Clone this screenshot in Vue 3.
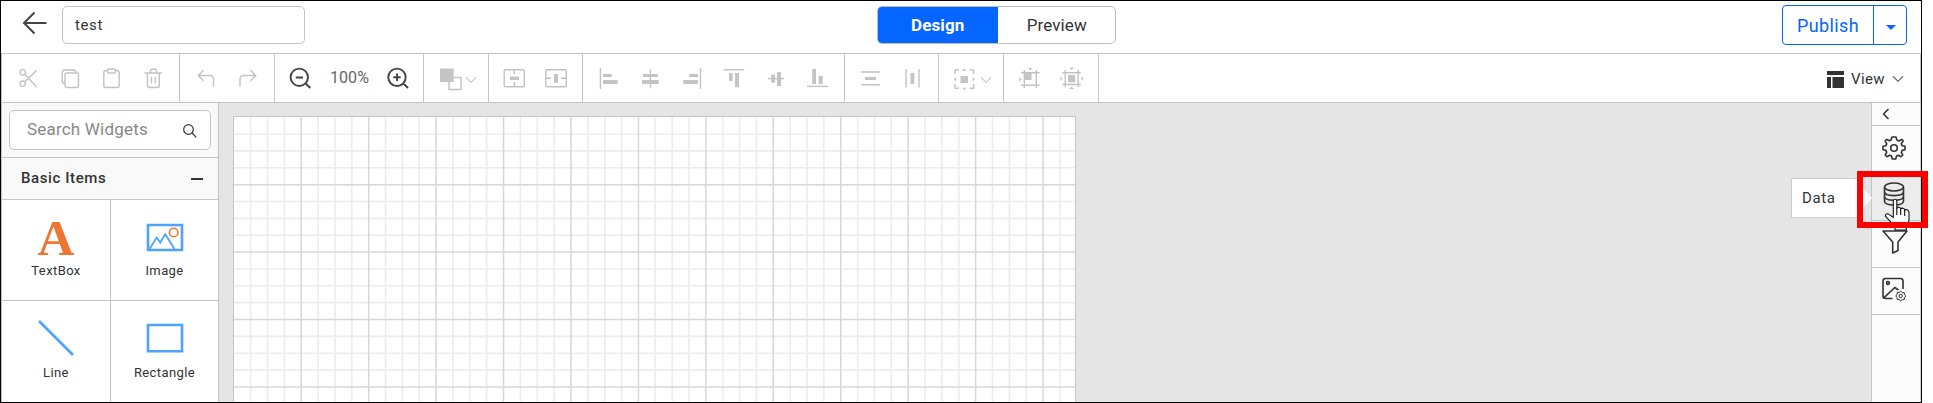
<script setup>
const groups = [
  ['cut', 'copy', 'paste', 'trash'],
  ['undo', 'redo'],
  ['zoomOut', 'level', 'zoomIn'],
  ['order', 'chevron'],
  ['centerH', 'centerV'],
  ['left', 'center', 'right', 'top', 'middle', 'bottom'],
  ['spaceV', 'spaceH'],
  ['size', 'chevron'],
  ['snap', 'fit'],
]
const widths = [178, 95, 149, 65, 94, 262, 94, 65, 95]
// s: stroked outline, f: filled shape
const icons = {
  cut: { s: 'M11.4 8.3a2.7 2.7 0 1 1-5.4 0a2.7 2.7 0 1 1 5.4 0zM11.4 19.7a2.7 2.7 0 1 1-5.4 0a2.7 2.7 0 1 1 5.4 0zM10.8 10.2L22.7 23M10.8 17.8L22.7 6.2' },
  copy: { s: 'M11 9H20.5Q22.5 9 22.5 11V21.5Q22.5 23.5 20.5 23.5H11Q9 23.5 9 21.5V11Q9 9 11 9zM9 20Q6.3 19.5 6.3 17V8.5Q6.3 6 8.8 6H17.5Q19.8 6 20.3 9' },
  paste: { s: 'M10.5 6.5H9Q6.8 6.5 6.8 8.7V21.5Q6.8 23.5 9 23.5H20Q22.2 23.5 22.2 21.5V8.7Q22.2 6.5 20 6.5H18.5M12 5H17Q18.5 5 18.5 7T17 9H12Q10.5 9 10.5 7T12 5z' },
  trash: { s: 'M5.5 9H23M8.5 9V21.5Q8.5 23.5 10.5 23.5H18.3Q20.3 23.5 20.3 21.5V9M11.5 9V7Q11.5 5.3 13 5.3H16Q17.5 5.3 17.5 7V9M12.4 13V19.3M16.2 13V19.3' },
  undo: { s: 'M11.5 6.3L6.2 11.5L11.5 16.8M6.2 11.5H17.5Q21.5 11.5 21.5 15.5V22.7' },
  redo: { s: 'M16.5 6.3L21.8 11.5L16.5 16.8M21.8 11.5H10Q6 11.5 6 15.5V22.7' },
  zoomOut: { s: 'M22 13.3a8.7 8.7 0 1 1-17.4 0a8.7 8.7 0 1 1 17.4 0zM19.5 19.3L24.3 24M9.8 13.5H17' },
  zoomIn: { s: 'M21.7 13.3a8.7 8.7 0 1 1-17.4 0a8.7 8.7 0 1 1 17.4 0zM19.2 19.3L24 24M9.3 13.3H16.7M13 9.6V17' },
  order: { s: 'M18 13.5H25V25.5H13V18', f: 'M4 4.5H17.7V18H4z' },
  centerH: { s: 'M5.5 5.7H23Q24.3 5.7 24.3 7V21.5Q24.3 22.8 23 22.8H5.5Q4.2 22.8 4.2 21.5V7Q4.2 5.7 5.5 5.7zM14.3 6V10.5M14.3 18V23', f: 'M10 12.5H19V16H10z' },
  centerV: { s: 'M5 5.7H23Q24.3 5.7 24.3 7V21.5Q24.3 22.8 23 22.8H5Q3.8 22.8 3.8 21.5V7Q3.8 5.7 5 5.7zM4 14.3H9M19 14.3H24', f: 'M12 10H16V18.8H12z' },
  left: { s: 'M5.4 4V25', f: 'M8 10H16.7V13H8zM8 16H22.7V20H8z' },
  center: { s: 'M13.4 5V24.3', f: 'M6 10H20.8V13H6zM5 16H21.8V20H5z' },
  right: { s: 'M22.5 4V25', f: 'M11.3 10H20V13H11.3zM5.2 16H20V20H5.2z' },
  top: { s: 'M3.5 5.8H24.2', f: 'M9 9H12.7V17H9zM15 9H19V23.3H15z' },
  middle: { s: 'M7 14.6H23.2', f: 'M10.3 10.5H14V18.7H10.3zM16 8H20V22H16z' },
  bottom: { s: 'M4 22.4H24.8', f: 'M9.2 5H13V20H9.2zM15.7 12H19.7V20H15.7z' },
  spaceV: { s: 'M4.2 8H22.8M4.2 20.8H22.8', f: 'M8 13H19V16H8z' },
  spaceH: { s: 'M7 5V23.5M20 5V23.5', f: 'M11.5 9H15.3V20H11.5z' },
  size: { s: 'M4 10V6H8M18.5 6H22.7V10M22.7 20V24.3H18.5M8 24.3H4V20', f: 'M9.5 12H17V19H9.5zM11 7L13.3 4.6L15.6 7zM11 23.7L13.3 26L15.6 23.7zM5.2 13L2.8 15.2L5.2 17.5zM21.6 13L24 15.2L21.6 17.5z' },
  snap: { s: 'M5 8.7H23.7M5 21.3H23.7M8.3 6V24M20.3 6V24', f: 'M8.3 8.7H15.5V16H8.3zM12 4L14.3 6.5L16.6 4zM3.3 13L5.8 15.2L3.3 17.5z' },
  fit: { s: 'M4.3 8.7H22.8M4.3 20.5H22.8M7.2 5.7V23.3M20.2 5.7V23.3', f: 'M10 11H17.2V18.2H10zM11.3 3.5L13.6 6L15.9 3.5zM11.3 25L13.6 22.6L15.9 25zM2.3 12.4L4.7 14.6L2.3 16.8zM25 12.4L22.6 14.6L25 16.8z' },
}
const step = 16.86
const cols = Array.from({ length: 49 }, (_, i) => i + 1)
const rows = Array.from({ length: 16 }, (_, i) => i + 1)
</script>

<template>
  <div class="frame">
    <header class="head">
      <svg class="back" width="26" height="26" viewBox="0 0 26 26"><path d="M12.5 2.5L2 13L12.5 23.5M2.5 13H24.5" /></svg>
      <div class="name">test</div>
      <div class="tabs">
        <div class="tab on">Design</div>
        <div class="tab">Preview</div>
      </div>
      <div class="publish">
        <span class="pub">Publish</span>
        <span class="drop"><i class="caret"></i></span>
      </div>
    </header>

    <div class="toolbar">
      <div v-for="(g, i) in groups" :key="i" class="group" :style="{ width: widths[i] + 'px' }">
        <template v-for="name in g" :key="name">
          <span v-if="name === 'level'" class="level">100%</span>
          <svg v-else-if="name === 'chevron'" class="chev" width="12" height="8" viewBox="0 0 12 8"><path d="M1 1.3L6 6.3L11 1.3" /></svg>
          <svg v-else class="ic" :class="name" width="28" height="28" viewBox="0 0 28 28">
            <path class="s" :d="icons[name].s" />
            <path v-if="icons[name].f" class="f" :d="icons[name].f" />
          </svg>
        </template>
      </div>
      <div class="view">
        <svg width="17" height="17" viewBox="0 0 17 17"><path d="M0 0H17V4H0zM0 6H4V17H0zM5.5 6H17V17H5.5z" /></svg>
        <span>View</span>
        <svg class="vchev" width="12" height="8" viewBox="0 0 12 8"><path d="M1 1.3L6 6.3L11 1.3" /></svg>
      </div>
    </div>

    <div class="body">
      <aside class="side">
        <div class="searchbar">
          <div class="search">
            <span>Search Widgets</span>
            <svg width="14" height="14" viewBox="0 0 14 14"><circle cx="5.5" cy="5.5" r="4.8" /><path d="M9 9L13.3 13.3" /></svg>
          </div>
        </div>
        <div class="section"><span>Basic Items</span><i class="minus"></i></div>
        <div class="cells">
          <div class="cell">
            <div class="glyph">A</div>
            <span>TextBox</span>
          </div>
          <div class="cell">
            <svg width="40" height="42" viewBox="0 0 40 42">
              <path class="blue" d="M3 9H37V34H3z" />
              <path class="thin" d="M4.5 33L11.7 21.5L15.3 26.5L20.3 18.2L29.5 33" />
              <circle cx="28.7" cy="16.5" r="4.3" class="sun" />
            </svg>
            <span>Image</span>
          </div>
          <div class="cell">
            <svg width="40" height="42" viewBox="0 0 40 42"><path class="blue" d="M3 4L37 38" /></svg>
            <span>Line</span>
          </div>
          <div class="cell">
            <svg width="40" height="42" viewBox="0 0 40 42"><path class="blue" d="M3 8H37V34.3H3z" /></svg>
            <span>Rectangle</span>
          </div>
        </div>
      </aside>

      <main class="stage">
        <svg class="grid" width="843" height="286" viewBox="0 0 843 286">
          <rect width="843" height="286" fill="#fff" />
          <g class="minor">
            <template v-for="c in cols" :key="c"><path v-if="c % 4" :d="`M${0.8 + c * step} 1V286`" /></template>
            <template v-for="r in rows" :key="r"><path v-if="r % 4" :d="`M1 ${1.2 + r * step}H842`" /></template>
          </g>
          <g class="major">
            <template v-for="c in cols" :key="c"><path v-if="c % 4 === 0" :d="`M${0.8 + c * step} 1V286`" /></template>
            <template v-for="r in rows" :key="r"><path v-if="r % 4 === 0" :d="`M1 ${1.2 + r * step}H842`" /></template>
          </g>
          <path class="edge" d="M0.5 286V0.5H842.5V286" />
        </svg>
      </main>

      <nav class="rail">
        <div class="fold"><svg width="8" height="12" viewBox="0 0 8 12"><path d="M6.5 1L1.5 6L6.5 11" /></svg></div>
        <div class="item">
          <svg width="26" height="26" viewBox="-13 -13 26 26">
            <path d="M-2 -11H2L2.9 -8L5 -7L7.8 -8.6L9.2 -7L7.3 -4.2L8.2 -2.2L11 -1.7V1.7L8.2 2.4L7.3 4.4L8.8 7L7 8.8L4.4 7.3L2.6 8.1L1.7 11H-1.7L-2.5 8.1L-4.4 7.3L-7 8.8L-8.8 7L-7.3 4.4L-8.1 2.4L-11 1.7V-1.7L-8.1 -2.3L-7.2 -4.2L-8.9 -7L-7.3 -8.6L-4.7 -7.2L-2.9 -8z" />
            <circle r="3.3" />
          </svg>
        </div>
        <div class="item hot">
          <svg class="db" width="26" height="26" viewBox="0 0 26 26">
            <ellipse cx="13" cy="6" rx="9.5" ry="4" />
            <path d="M3.5 6V20C3.5 25.3 22.5 25.3 22.5 20V6M3.5 10.6C3.5 16 22.5 16 22.5 10.6M3.5 15.3C3.5 20.6 22.5 20.6 22.5 15.3" />
          </svg>
        </div>
        <div class="item">
          <svg class="funnel" width="26" height="26" viewBox="0 0 26 26"><path d="M1 2H25L16 13V21.5L10.7 24V13z" /></svg>
        </div>
        <div class="item">
          <svg class="pic" width="26" height="26" viewBox="-1 -1 26 26">
            <path d="M10.5 21.5H3.5Q1 21.5 1 19V4Q1 1.5 3.5 1.5H18.5Q21 1.5 21 4V12M1.8 20.8L12.8 10.5L16.5 13" />
            <circle cx="6" cy="6" r="1.4" />
            <circle cx="18.7" cy="19" r="1.7" class="fine" />
            <path class="fine" d="M18.7 14.3L20.4 15.6L22.3 15.7L22.4 17.6L23.9 19L22.4 20.7L22.3 22.5L20.2 22.7L18.7 24L17.2 22.7L15.2 22.5L15 20.5L13.8 19L15 17.4L15.2 15.5L17.2 15.4z" />
          </svg>
        </div>
      </nav>
    </div>

    <div class="tip">Data</div>
    <svg class="arrow" width="10" height="20" viewBox="0 0 10 20"><path d="M0 0L9 10L0 20z" /></svg>
    <svg class="hand" width="27" height="34" viewBox="0 0 27 34">
      <path d="M9.3 19.5V3.2Q9.3 1.2 11 1.2T12.8 3.2V10.5Q13.3 9 15 9.2T16.7 11Q17.3 10 19 10.2T20.7 12.2Q21.3 11.2 23 11.7T25 14V22Q25 26 22.3 29V32H11V29.5Q9.3 28 6.5 23.5L2 19Q.7 17.3 2.2 16.2T5.3 16.6z" />
      <path d="M12.8 10V17M16.7 11V17M20.7 12V18" />
    </svg>
    <div class="mark"></div>
  </div>
</template>

<style>
body { margin: 0; background: #fff; }
</style>

<style scoped>
* { box-sizing: border-box; }
svg { display: block; flex: none; }
.frame { position: relative; width: 1922px; height: 403px; border: 1px solid #000; font-family: Roboto, sans-serif; color: #333; display: flex; flex-direction: column; background: #fff; }
.head { height: 52px; flex: none; display: flex; align-items: flex-start; padding-left: 21px; }
.back { margin-top: 9px; fill: none; stroke: #444; stroke-width: 2; }
.name { margin: 5px 0 0 14px; width: 243px; height: 38px; border: 1px solid #c4c4c4; border-radius: 5px; padding-left: 12px; font-size: 15px; line-height: 36px; letter-spacing: .6px; color: #333; }
.tabs { display: flex; margin: 5px 0 0 572px; width: 239px; height: 38px; border: 1px solid #bdbdbd; border-radius: 5px; overflow: hidden; }
.tab { width: 118px; padding-left: 1px; font-size: 17px; line-height: 36px; text-align: center; letter-spacing: .1px; }
.tab.on { width: 121px; height: 38px; margin: -1px 0 0 -1px; background: #0565ff; color: #fff; font-weight: 700; line-height: 38px; }
.publish { display: flex; margin: 4px 14px 0 auto; width: 125px; height: 40px; border: 1px solid #0565ff; border-radius: 4px; color: #0565ff; }
.pub { width: 91px; border-right: 1px solid #0565ff; font-size: 18px; line-height: 39px; text-align: center; letter-spacing: .4px; }
.drop { flex: 1; display: flex; justify-content: center; padding: 19px 0 0 1px; }
.caret { width: 0; height: 0; border: 5px solid transparent; border-top-color: #0565ff; border-bottom: 0; }

.toolbar { height: 50px; flex: none; display: flex; border: 1px solid #c4c4c4; }
.group { flex: none; display: flex; border-right: 1px solid #c4c4c4; padding: 10px 0 0 12px; }
.ic { margin-right: 13px; }
.ic:nth-child(odd) { margin-right: 14px; }
.s { fill: none; stroke: #c2c2c2; stroke-width: 1.4; stroke-linejoin: round; }
.f { fill: #c4c4c4; }
.zoomOut .s, .zoomIn .s { stroke: #444; stroke-width: 1.9; }
.level { width: 55px; flex: none; line-height: 28px; font-size: 16px; color: #666; text-align: center; letter-spacing: .1px; }
.group .zoomOut.ic { margin: 0 8px 0 -1px; }
.group .zoomIn.ic { margin: 0 0 0 7px; }
.centerH.ic { margin-left: -1px; }
.group .order.ic, .group .size.ic { margin-right: 1px; }
.chev { margin-top: 12px; fill: none; stroke: #c4c4c4; stroke-width: 1.1; }
.view { margin-left: auto; padding-right: 16px; display: flex; align-items: center; height: 48px; font-size: 15px; letter-spacing: .4px; }
.view span { margin: 0 7px 0 7px; padding-top: 2px; }
.view svg { fill: #333; margin-top: 2px; }
.view .vchev { fill: none; stroke: #555; stroke-width: 1.1; margin-top: 2px; }

.body { flex: 1; min-height: 0; display: flex; border-left: 1px solid #c4c4c4; }
.side { width: 217px; flex: none; border-right: 1px solid #c4c4c4; background: #f9f9f9; }
.searchbar { height: 55px; border-bottom: 1px solid #c4c4c4; padding: 7px 0 0 7px; }
.search { width: 202px; height: 40px; background: #fff; border: 1px solid #c4c4c4; border-radius: 5px; display: flex; align-items: center; justify-content: space-between; padding: 0 13px 0 17px; font-size: 17px; letter-spacing: .2px; color: #888; }
.search span { padding-bottom: 3px; }
.search svg { fill: none; stroke: #333; stroke-width: 1.2; margin-top: 1px; }
.section { height: 42px; border-bottom: 1px solid #c4c4c4; display: flex; align-items: center; justify-content: space-between; padding: 0 15px 0 19px; font-size: 15px; font-weight: 500; letter-spacing: .6px; color: #333; }
.section span { padding-bottom: 2px; }
.minus { width: 12px; height: 2px; background: #333; }
.cells { height: 202px; display: grid; grid-template-columns: 109px 107px; grid-template-rows: 101px 101px; background: #fff; }
.cell { display: flex; flex-direction: column; align-items: center; padding-top: 16px; font-size: 13px; line-height: 18px; letter-spacing: .4px; border-bottom: 1px solid #c4c4c4; }
.cell:nth-child(odd) { border-right: 1px solid #c4c4c4; }
.cell:nth-child(n+3) { border-bottom: 0; padding-top: 16px; }
.cell span { margin-top: 4px; }
.cell:nth-child(n+3) span { margin-top: 5px; }
.glyph { height: 42px; font: 700 51px/44px "Liberation Serif", serif; letter-spacing: 0; color: #ee7633; }
.blue { fill: none; stroke: #4da3ff; stroke-width: 2.6; }
.thin { fill: none; stroke: #4da3ff; stroke-width: 1.8; }
.sun { fill: none; stroke: #ee7633; stroke-width: 1.6; }

.stage { flex: 1; background: #e5e5e5; padding: 13px 0 0 14px; overflow: hidden; }
.minor path { stroke: #ececec; stroke-width: 1.6; }
.major path { stroke: #d7d7d7; stroke-width: 1.5; }
.edge { fill: none; stroke: #c4c4c4; }

.rail { width: 50px; flex: none; border-left: 1px solid #c4c4c4; border-right: 1px solid #d4d4d4; background: #fcfcfc; }
.rail svg { fill: none; stroke: #333; stroke-width: 1.6; stroke-linejoin: round; }
.fold { height: 23px; border-bottom: 1px solid #c4c4c4; padding: 5px 0 0 10px; }
.item { height: 47px; border-bottom: 1px solid #c4c4c4; padding: 9px 0 0 9px; }
.item.hot { height: 48px; padding-top: 8px; background: #ececec; }
.item .funnel { margin: -1px 0 0 1px; }
.item .pic { margin-top: -1px; }
.rail .fine { stroke-width: 1; }

.tip { position: absolute; left: 1790px; top: 177px; width: 72px; height: 40px; border: 1px solid #ccc; border-right: 0; background: #fff; padding-left: 10px; font-size: 15px; line-height: 38px; letter-spacing: .6px; }
.arrow { position: absolute; left: 1862px; top: 187px; fill: #fff; }
.hand { position: absolute; left: 1883px; top: 197px; fill: #fff; stroke: #111; stroke-width: 1.1; }
.mark { position: absolute; left: 1856px; top: 170px; width: 71px; height: 57px; border: 6px solid #f00; }
</style>
